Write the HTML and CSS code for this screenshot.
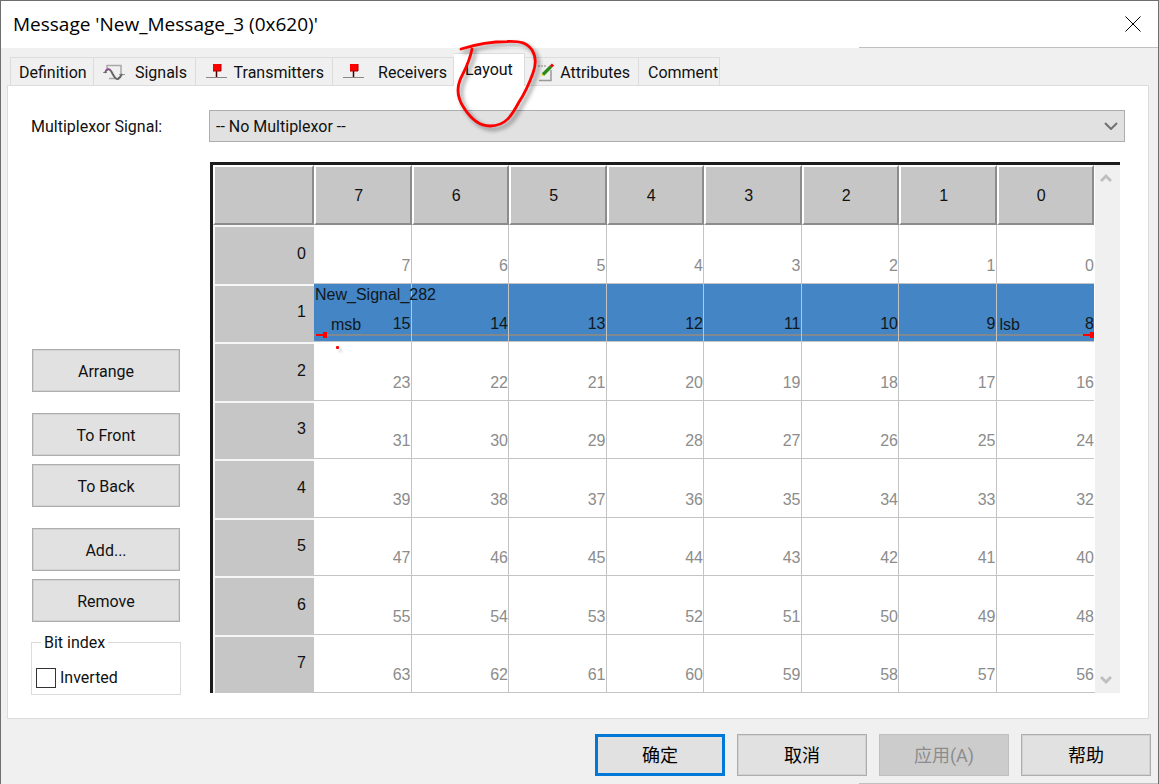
FILE: index.html
```html
<!DOCTYPE html>
<html lang="zh-CN">
<head>
<meta charset="utf-8">
<title>Message 'New_Message_3 (0x620)'</title>
<link rel="stylesheet" href="styles.css">
</head>
<body>
<main class="dialog">
  <header class="titlebar">
    <h1 class="title">Message 'New_Message_3 (0x620)'</h1>
    <button class="close" type="button" aria-label="Close">
      <svg width="16" height="16" viewBox="0 0 16 16"><path d="M.5 .5l15 15M15.5 .5l-15 15" stroke="#000" stroke-width="1" fill="none"/></svg>
    </button>
  </header>

  <nav class="tabs" role="tablist">
    <button class="tab w-definition" role="tab" type="button">Definition</button>
    <button class="tab w-signals" role="tab" type="button">
      <svg class="tab-icon" width="22" height="20" viewBox="0 0 22 20" fill="none"><path d="M4 6V2.500h14v9M6 15.500h6" stroke="#a8a8a8" stroke-width="1.500"/><path d="M0 9.500h4M16 11.500h6" stroke="#999"/><path d="M2 10c1-4 4-5 6-2s4 9 7 8c2-1 3-3 4-5" stroke="#666" stroke-width="2"/><path d="M3 7l3-1" stroke="#a040a0" stroke-width="1.500"/></svg>
      <span>Signals</span></button>
    <button class="tab w-transmitters" role="tab" type="button">
      <svg class="tab-icon" width="22" height="20" viewBox="0 0 22 20"><path d="M1 14.500h21" stroke="#888"/><path d="M11.500 8v6" stroke="#400" stroke-width="1.500"/><path d="M8 1h8v7H8z" fill="#f00"/><path d="M8 8h8V1" stroke="#a00" fill="none"/></svg>
      <span>Transmitters</span></button>
    <button class="tab w-receivers" role="tab" type="button">
      <svg class="tab-icon" width="22" height="20" viewBox="0 0 22 20"><path d="M1 14.500h21" stroke="#888"/><path d="M11.500 8v6" stroke="#400" stroke-width="1.500"/><path d="M8 1h8v7H8z" fill="#f00"/><path d="M8 8h8V1" stroke="#a00" fill="none"/></svg>
      <span>Receivers</span></button>
    <button class="tab w-layout active" role="tab" type="button" aria-selected="true">Layout
      <svg class="scribble" width="100" height="104" viewBox="450 35 100 104" fill="none"><path d="M461 49C477 44 493 41.500 507 41.500C521 41 527 43 532 50C537 58 536 65 533 73C529 84 525 93 519 102C512 115 506 126 490 126C479 126 471 119 464 108C458 99 456 90 460 80C464 71 469 64 472 49" stroke="#f00" stroke-width="2.800" stroke-linecap="round" stroke-linejoin="round"/></svg>
    </button>
    <button class="tab w-attributes" role="tab" type="button">
      <svg class="tab-icon" width="22" height="20" viewBox="0 0 22 20" fill="none"><path d="M3 3h9" stroke="#888" stroke-dasharray="2 1"/><path d="M16 7v10.500H4" stroke="#999" stroke-width="1.500"/><path d="M6 13l4-1-2-2z" fill="#dd0"/><path d="M8 11.500L16 3.500" stroke="#2c8a18" stroke-width="3.200"/><path d="M16 3.500l2-2" stroke="#e00" stroke-width="3"/></svg>
      <span>Attributes</span></button>
    <button class="tab w-comment" role="tab" type="button">Comment</button>
  </nav>

  <section class="panel">
    <div class="row">
      <label class="row-label" for="mux">Multiplexor Signal:</label>
      <div class="combo">
        <select id="mux" class="combo-box"><option>-- No Multiplexor --</option></select>
        <svg class="combo-arrow" width="14" height="8" viewBox="0 0 14 8"><path d="M1 1l6 6 6-6" stroke="#707070" stroke-width="2" fill="none"/></svg>
      </div>
    </div>
    <div class="work">
      <aside class="side">
        <div class="group"><button class="btn" type="button">Arrange</button></div>
        <div class="group"><button class="btn" type="button">To Front</button><button class="btn" type="button">To Back</button></div>
        <div class="group"><button class="btn" type="button">Add...</button><button class="btn" type="button">Remove</button></div>
        <fieldset class="bit-index">
          <legend>Bit index</legend>
          <label class="check"><input type="checkbox"><span>Inverted</span></label>
        </fieldset>
      </aside>
      <div class="frame">
        <table class="bits">
          <thead><tr><th class="corner"></th><th>7</th><th>6</th><th>5</th><th>4</th><th>3</th><th>2</th><th>1</th><th>0</th></tr></thead>
          <tbody>
            <tr><th>0</th><td>7</td><td>6</td><td>5</td><td>4</td><td>3</td><td>2</td><td>1</td><td>0</td></tr>
            <tr class="signal"><th>1</th><td class="first"><span class="name">New_Signal_282</span><span class="edge msb">msb</span>15<i class="mark mark-left"></i></td><td>14</td><td>13</td><td>12</td><td>11</td><td>10</td><td>9</td><td><span class="edge lsb">lsb</span>8<i class="mark mark-right"></i></td></tr>
            <tr><th>2</th><td>23<i class="dot"></i></td><td>22</td><td>21</td><td>20</td><td>19</td><td>18</td><td>17</td><td>16</td></tr>
            <tr><th>3</th><td>31</td><td>30</td><td>29</td><td>28</td><td>27</td><td>26</td><td>25</td><td>24</td></tr>
            <tr><th>4</th><td>39</td><td>38</td><td>37</td><td>36</td><td>35</td><td>34</td><td>33</td><td>32</td></tr>
            <tr><th>5</th><td>47</td><td>46</td><td>45</td><td>44</td><td>43</td><td>42</td><td>41</td><td>40</td></tr>
            <tr><th>6</th><td>55</td><td>54</td><td>53</td><td>52</td><td>51</td><td>50</td><td>49</td><td>48</td></tr>
            <tr><th>7</th><td>63</td><td>62</td><td>61</td><td>60</td><td>59</td><td>58</td><td>57</td><td>56</td></tr>
          </tbody>
        </table>
        <div class="scroll">
          <button type="button" aria-label="Scroll up"><svg width="12" height="10" viewBox="0 0 12 10"><path d="M1 8l5-5 5 5" stroke="#bfbfbf" stroke-width="3" fill="none"/></svg></button>
          <button type="button" aria-label="Scroll down"><svg width="12" height="10" viewBox="0 0 12 10"><path d="M1 2l5 5 5-5" stroke="#bfbfbf" stroke-width="3" fill="none"/></svg></button>
        </div>
      </div>
    </div>
  </section>

  <footer class="actions">
    <button class="btn act default" type="button">确定</button>
    <button class="btn act" type="button">取消</button>
    <button class="btn act" type="button" disabled>应用(A)</button>
    <button class="btn act" type="button">帮助</button>
  </footer>
</main>
</body>
</html>
```
FILE: styles.css
```css
* { box-sizing: border-box; }
body { margin: 0; }
button, select, input { font: inherit; color: inherit; margin: 0; }
svg { display: block; }

.dialog {
  display: flex;
  flex-direction: column;
  min-height: 100vh;
  border: 1px solid #6e6e6e;
  border-bottom: 0;
  color: #111;
  font: 16px/20px Roboto, "Noto Sans CJK SC", sans-serif;
  background: linear-gradient(#c0c0c0, #c0c0c0) right bottom / 299px 1px no-repeat #f0f0f0;
}

.titlebar {
  display: flex;
  align-items: center;
  justify-content: space-between;
  height: 47px;
  padding: 0 17px 2px 12px;
  background: linear-gradient(#c0c0c0, #c0c0c0) right bottom / 299px 1px no-repeat #fff;
}
.title { margin: 0; color: #000; font: 400 19px/24px "Open Sans", "Noto Sans", sans-serif; }
.close { padding: 0; border: 0; background: none; }

.tabs { display: flex; align-items: flex-end; height: 37px; padding-left: 9px; }
.tab {
  display: flex;
  align-items: center;
  justify-content: space-between;
  height: 28px;
  padding: 2px 8px 0 9px;
  border: 1px solid #dcdcdc;
  border-width: 1px 1px 0 0;
  background: #f0f0f0;
  white-space: nowrap;
}
.w-definition { width: 84px; border-left-width: 1px; padding-left: 8px; }
.w-signals { width: 102px; }
.w-transmitters { width: 137px; }
.w-receivers { width: 121px; padding-right: 6px; }
.w-layout { width: 71px; }
.w-attributes { width: 114px; padding-left: 10px; }
.w-comment { width: 81px; padding-right: 4px; }
.tab-icon { flex: none; }
.tab.active {
  position: relative;
  z-index: 1;
  height: 33px;
  margin-bottom: -1px;
  padding: 0 9px 0 11px;
  background: #fff;
}
.scribble {
  position: absolute;
  left: -4px;
  top: -19px;
  filter: drop-shadow(3px 3px 2px rgba(0, 0, 0, .45));
  pointer-events: none;
}

.panel {
  display: flex;
  flex: 1;
  flex-direction: column;
  gap: 20px;
  margin: 0 9px 0 6px;
  padding: 24px 23px 23px 23px;
  border: 1px solid #dcdcdc;
  background: #fff;
}
.row { display: flex; align-items: center; }
.row-label { width: 178px; padding-top: 2px; }
.combo { position: relative; flex: 1; }
.combo-box {
  width: 100%;
  height: 32px;
  padding: 2px 30px 0 6px;
  border: 1px solid #adadad;
  border-radius: 0;
  background: #e1e1e1;
  appearance: none;
}
.combo-arrow { position: absolute; right: 7px; top: 12px; pointer-events: none; }

.work { display: flex; flex: 1; }
.side {
  display: flex;
  flex-direction: column;
  justify-content: flex-end;
  width: 150px;
  margin-right: 29px;
}
.group { display: flex; flex-direction: column; gap: 8px; margin: 0 1px 21px; }
.group:nth-child(3) { margin-bottom: 10px; }
.btn {
  height: 43px;
  padding: 2px 0 0;
  border: 1px solid #adadad;
  background: #e1e1e1;
  box-shadow: inset 0 0 0 1px #d2d2d2;
}
.bit-index { height: 64px; margin: 0; padding: 15px 4px 0; border: 1px solid #dcdcdc; }
.group:nth-child(3) + .bit-index { margin-top: -1px; }
.bit-index legend { margin-left: 5px; padding: 2px 3px 0; }
.check { display: flex; align-items: center; gap: 4px; }
.check input { width: 20px; height: 20px; border: 1px solid #333; background: #fff; appearance: none; }

.frame {
  display: flex;
  flex: 1;
  gap: 1px;
  margin: 0 5px 2px 0;
  border: 3px solid #1c1c1c;
  border-width: 3px 0 0 3px;
  box-shadow: inset 0 -1px #d0d0d0;
}
.bits {
  flex: 1;
  table-layout: fixed;
  border-spacing: 0;
  font: 16px/20px "Liberation Sans", Arial, sans-serif;
}
.bits th { padding: 0 8px 3px 0; background: #c6c6c6; font-weight: 400; }
.bits thead th {
  height: 60px;
  padding: 2px 8px 0 0;
  border: 2px solid #8c8c8c;
  border-top-color: #fff;
  border-left-color: #fff;
}
.bits .corner { width: 101px; }
.bits tbody th {
  border-top: 2px solid #f6f6f6;
  border-left: 2px solid #f6f6f6;
  text-align: right;
}
.bits td {
  position: relative;
  padding: 0 0 7px;
  border: 1px solid #c4c4c4;
  border-width: 0 1px 1px 0;
  color: #8c8c8c;
  text-align: right;
  vertical-align: bottom;
}
.bits td:last-child { border-right: 0; }
.bits .signal td {
  color: #101820;
  background: linear-gradient(#808890, #808890) 0 50px / 100% 2px no-repeat #4385c5;
}
.bits .signal .first { z-index: 1; }
.name { position: absolute; left: 1px; top: 1px; }
.edge { position: absolute; bottom: 6px; }
.msb { left: 17px; }
.lsb { left: 3px; }
.mark {
  position: absolute;
  top: 48px;
  width: 11px;
  height: 6px;
  background: linear-gradient(#f00, #f00) right / 4px 6px no-repeat, linear-gradient(#f00, #f00) center / 100% 2px no-repeat;
}
.mark-left { left: 2px; }
.mark-right { right: 0; }
.dot {
  position: absolute;
  left: 22px;
  top: 4px;
  width: 3px;
  height: 3px;
  border-radius: 1px;
  background: #f00;
  box-shadow: 3px 3px 3px #ccc;
}
.scroll {
  display: flex;
  flex-direction: column;
  justify-content: space-between;
  width: 25px;
  background: #f0f0f0;
}
.scroll button { padding: 8px 7px 8px 5px; border: 0; background: none; }

.actions { display: flex; justify-content: flex-end; gap: 12px; padding: 15px 7px 8px; }
.act { width: 130px; height: 42px; font-size: 18px; color: #000; }
.act.default { border: 3px solid #0078d7; box-shadow: none; }
.act:disabled { border-color: #bfbfbf; background: #ccc; color: #8c8c8c; box-shadow: none; }
```
